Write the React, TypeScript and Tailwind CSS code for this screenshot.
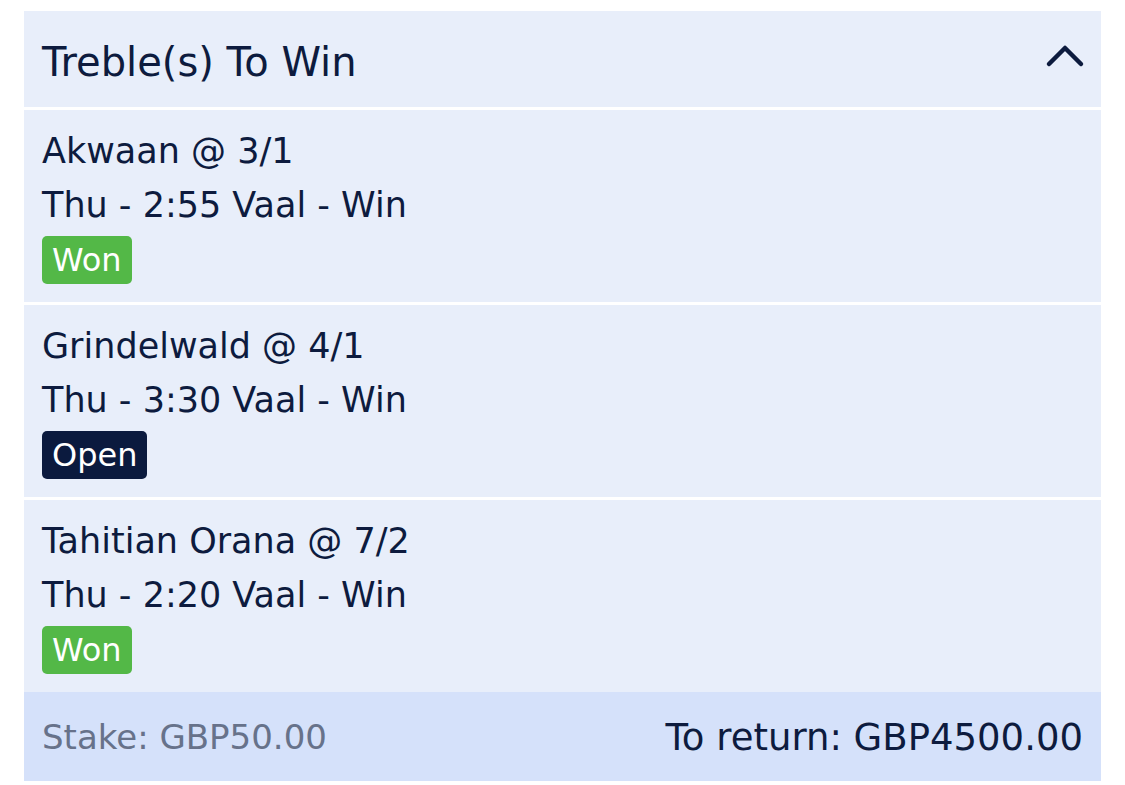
import React from "react";

type Leg = {
  name: string;
  odds: string;
  race: string;
  status: "Won" | "Open";
};

const legs: Leg[] = [
  { name: "Akwaan", odds: "3/1", race: "Thu - 2:55 Vaal - Win", status: "Won" },
  { name: "Grindelwald", odds: "4/1", race: "Thu - 3:30 Vaal - Win", status: "Open" },
  { name: "Tahitian Orana", odds: "7/2", race: "Thu - 2:20 Vaal - Win", status: "Won" },
];

function StatusBadge({ status }: { status: Leg["status"] }) {
  const color = status === "Won" ? "bg-[#53b847]" : "bg-[#0b1a3e]";
  return (
    <span
      className={`inline-flex h-[48px] items-center rounded-[5px] px-[10px] text-[32px] leading-none text-white ${color}`}
    >
      {status}
    </span>
  );
}

export default function App() {
  return (
    <div className="min-h-screen bg-white pt-[11px] px-[24px] font-['DejaVu_Sans',Verdana,sans-serif] text-[#0d1b3e]">
      <div className="flex w-[1077px] flex-col gap-[3px]">
        {/* header */}
        <div className="flex h-[96px] items-center justify-between bg-[#e8eefa] px-[18px] pt-[6px]">
          <h1 className="text-[40px] font-normal">Treble(s) To Win</h1>
          <svg width="40" height="24" viewBox="0 0 40 24" fill="none" className="mb-[12px] mr-[-2px]">
            <path
              d="M4 20 L20 4 L36 20"
              stroke="#0d1b3e"
              strokeWidth="4.5"
              strokeLinecap="round"
              strokeLinejoin="round"
            />
          </svg>
        </div>

        {legs.map((leg) => (
          <div
            key={leg.name}
            className="flex h-[192px] flex-col items-start bg-[#e8eefa] px-[18px] pt-[14px]"
          >
            <div className="text-[35px] leading-[54px]">
              {leg.name} @ {leg.odds}
            </div>
            <div className="text-[35px] leading-[54px]">{leg.race}</div>
            <div className="mt-[4px]">
              <StatusBadge status={leg.status} />
            </div>
          </div>
        ))}

        {/* footer */}
        <div className="-mt-[3px] flex h-[89px] items-center justify-between bg-[#d5e1fa] px-[18px] pt-[2px]">
          <span className="text-[34px] text-[#67728a]">Stake: GBP50.00</span>
          <span className="text-[37px]">To return: GBP4500.00</span>
        </div>
      </div>
    </div>
  );
}
